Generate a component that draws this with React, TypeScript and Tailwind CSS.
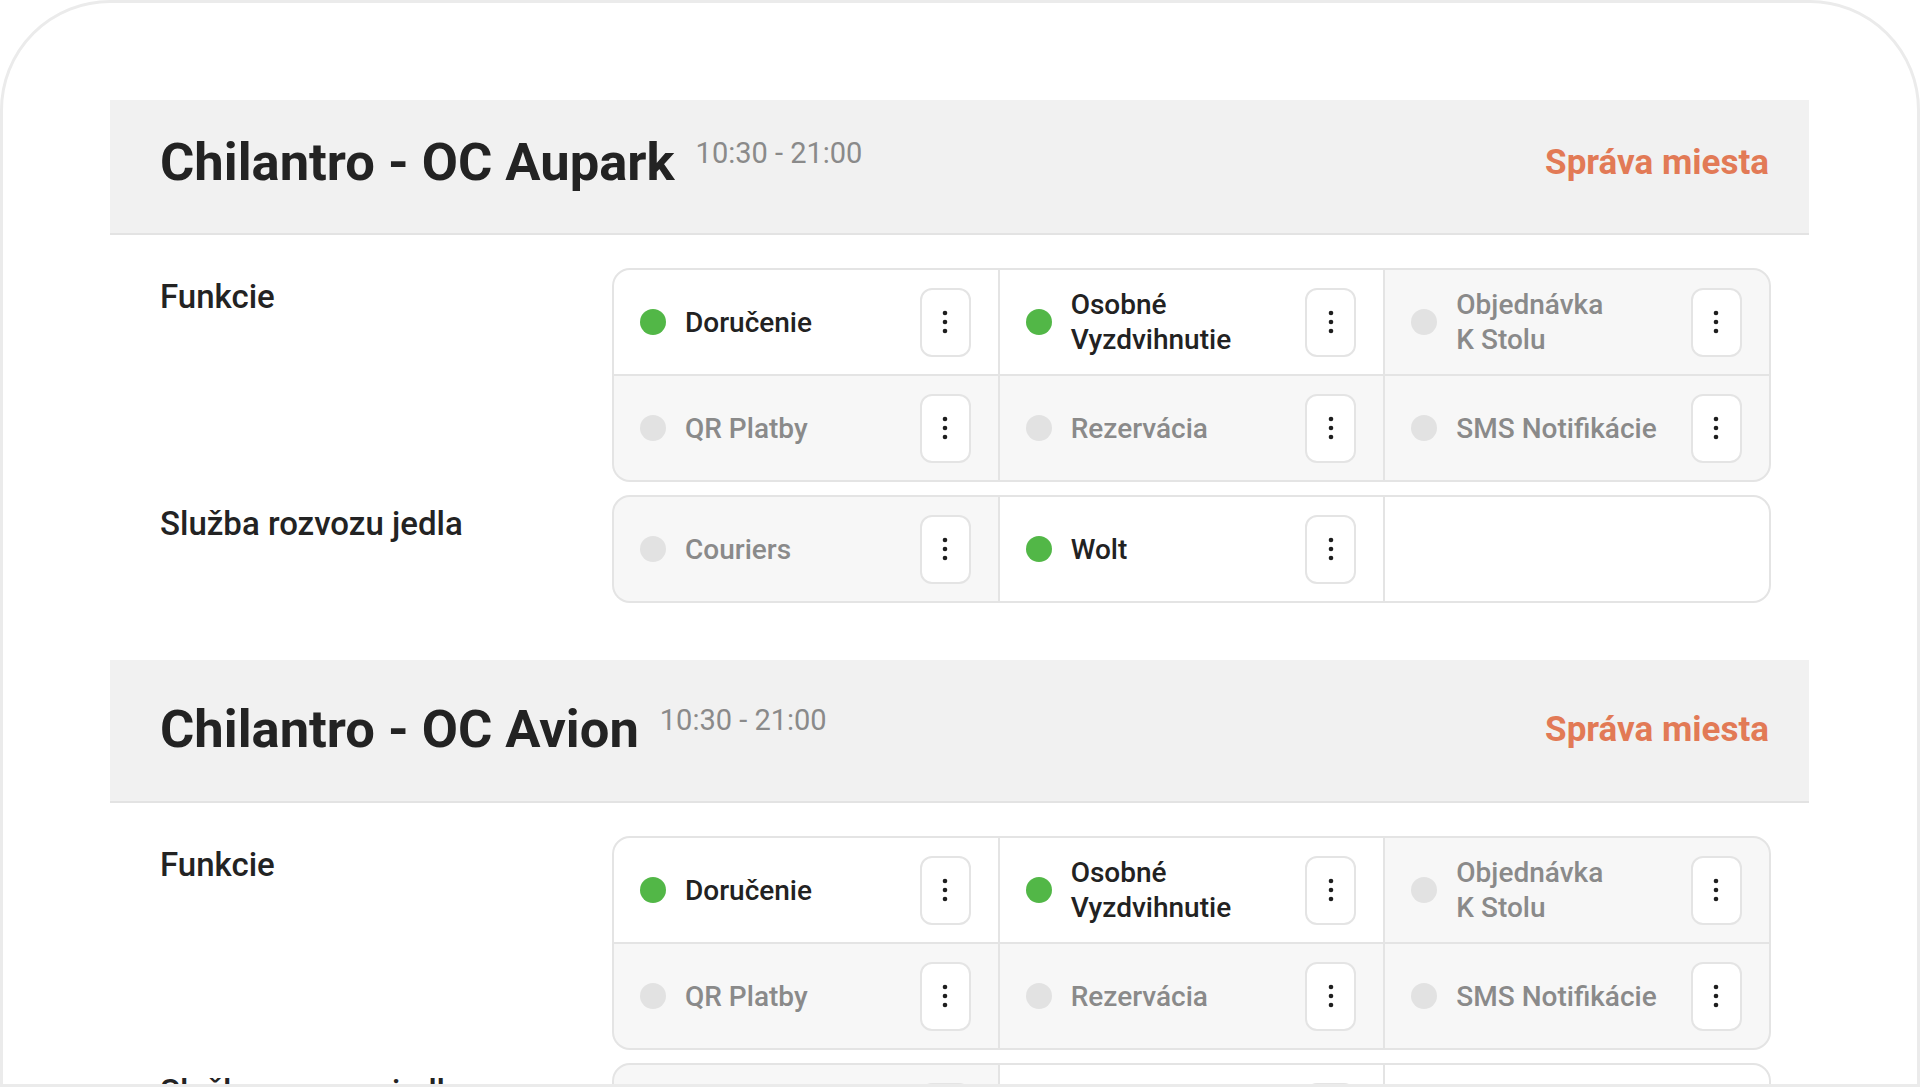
import React from "react";

type Item = { lines: string[]; on: boolean } | null;

const features: Item[] = [
  { lines: ["Doručenie"], on: true },
  { lines: ["Osobné", "Vyzdvihnutie"], on: true },
  { lines: ["Objednávka", "K Stolu"], on: false },
  { lines: ["QR Platby"], on: false },
  { lines: ["Rezervácia"], on: false },
  { lines: ["SMS Notifikácie"], on: false },
];

const delivery: Item[] = [
  { lines: ["Couriers"], on: false },
  { lines: ["Wolt"], on: true },
  null,
];

const sections = [
  { name: "Chilantro - OC Aupark", hours: "10:30 - 21:00" },
  { name: "Chilantro - OC Avion", hours: "10:30 - 21:00" },
];

function Kebab() {
  return (
    <button className="flex-none w-[51px] h-[69px] rounded-[12px] border-2 border-[#e4e4e4] bg-white flex items-center justify-center">
      <svg width="6" height="24" viewBox="0 0 6 24">
        <circle cx="3" cy="3" r="2.3" fill="#1e1e1e" />
        <circle cx="3" cy="12" r="2.3" fill="#1e1e1e" />
        <circle cx="3" cy="21" r="2.3" fill="#1e1e1e" />
      </svg>
    </button>
  );
}

function Cell({ item }: { item: Item }) {
  if (!item) return <div className="bg-white h-[104px]" />;
  return (
    <div
      className={
        "h-[104px] flex items-center pl-[26px] pr-[27px] " +
        (item.on ? "bg-white" : "bg-[#f7f7f7]")
      }
    >
      <span
        className={
          "flex-none w-[26px] h-[26px] rounded-full " +
          (item.on ? "bg-[#52b747]" : "bg-[#e2e2e2]")
        }
      />
      <div
        className={
          "flex-1 min-w-0 ml-[19px] text-[28px] leading-[35px] font-medium " +
          (item.on ? "text-[#222222]" : "text-[#8a8a8a]")
        }
      >
        {item.lines.map((l, i) => (
          <div key={i} className="whitespace-nowrap">
            {l}
          </div>
        ))}
      </div>
      <Kebab />
    </div>
  );
}

function Grid({ items }: { items: Item[] }) {
  return (
    <div className="flex-1 grid grid-cols-3 gap-[2px] bg-[#e4e4e4] border-2 border-[#e4e4e4] rounded-[18px] overflow-hidden">
      {items.map((it, i) => (
        <Cell key={i} item={it} />
      ))}
    </div>
  );
}

function Section({ name, hours, first }: { name: string; hours: string; first: boolean }) {
  return (
    <div className={first ? "" : "mt-[57px]"}>
      <div
        className={
          "bg-[#f1f1f1] border-b-2 border-[#e3e3e3] flex items-center justify-between pl-[50px] pr-[40px] " +
          (first ? "h-[135px] pb-[9px]" : "h-[143px] pb-[2px]")
        }
      >
        <div className="flex items-start">
          <h2 className="text-[52.5px] leading-none font-bold text-[#232323]">{name}</h2>
          <span className="ml-[21px] mt-[3px] text-[29px] leading-none text-[#8a8a8a]">{hours}</span>
        </div>
        <a className="text-[35px] leading-none font-bold text-[#e27a56]">Správa miesta</a>
      </div>
      <div className="pl-[50px] pr-[38px] pt-[33px]">
        <div className="flex items-start">
          <div className="flex-none w-[452px] pt-[12px] text-[33px] leading-none font-medium text-[#232323]">
            Funkcie
          </div>
          <Grid items={features} />
        </div>
        <div className="flex items-start mt-[13px]">
          <div className="flex-none w-[452px] pt-[12px] text-[33px] leading-none font-medium text-[#232323]">
            Služba rozvozu jedla
          </div>
          <Grid items={delivery} />
        </div>
      </div>
    </div>
  );
}

export default function App() {
  return (
    <div className="w-full h-[1087px] overflow-hidden bg-white font-['Roboto',sans-serif]">
      <div className="h-full border-[3px] border-[#ebebeb] rounded-t-[110px] overflow-hidden pt-[97px] pl-[107px] pr-[108px]">
        {sections.map((s, i) => (
          <Section key={i} name={s.name} hours={s.hours} first={i === 0} />
        ))}
      </div>
    </div>
  );
}
